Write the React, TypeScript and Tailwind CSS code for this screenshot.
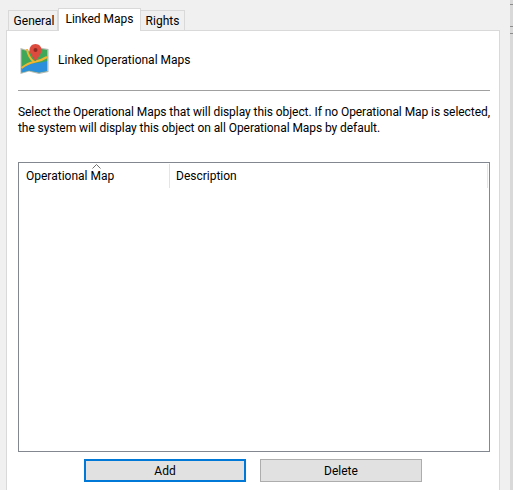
const font = "font-['Roboto','Noto_Sans',sans-serif]"

function MapIcon() {
  return (
    <svg width="30" height="32" viewBox="0 0 30 32" className="shrink-0">
      <path d="M0.5 4 L9 6.5 L19 3.5 L28.5 5 L28.5 28 L19 30 L9 27.5 L0.5 30 Z" fill="#b4b8b4" />
      <path d="M1.5 5.5 L9 7.5 L19 4.5 L27 6 L27 27 L19 28.5 L9 26.5 L1.5 28.5 Z" fill="#3fa758" />
      <path d="M1.5 23 Q10 19 16 19 Q21 19 27 17 L27 27 L19 28.5 L9 26.5 L1.5 28.5 Z" fill="#2c8fdc" />
      <path d="M1.5 24 Q8 19 14 18 Q21 17 27 13" fill="none" stroke="#f3b52f" strokeWidth="2.2" />
      <path d="M7 5 Q8 13 14 18" fill="none" stroke="#f3b52f" strokeWidth="2" />
      <path d="M15.5 0 C11.8 0 9.5 2.8 9.5 6 C9.5 10 15.5 17 15.5 17 C15.5 17 21.5 10 21.5 6 C21.5 2.8 19.2 0 15.5 0 Z" fill="#dc4b3e" />
      <circle cx="15.5" cy="6" r="2" fill="#8f2a22" />
    </svg>
  )
}

export default function App() {
  return (
    <div className={`${font} relative h-[490px] w-[513px] overflow-hidden bg-[#f0f0f0] text-[12px] text-black`}>
      {/* window edge on the right */}
      <div className="absolute right-0 top-0 h-full w-[3px] bg-[#d9d9d9]">
        <div className="mt-[4px] h-px bg-[#8c8c8c]" />
        <div className="mt-[21px] h-px bg-[#8c8c8c]" />
        <div className="mt-[6px] h-px bg-[#8c8c8c]" />
      </div>

      <div className="flex h-[30px] items-end pl-[8px]">
        <div className="flex h-[20px] w-[50px] items-center justify-center border border-b-0 border-[#d9d9d9] pl-[2px]">General</div>
        <div className="relative z-10 -mb-px flex h-[23px] w-[83px] items-center justify-center border border-b-0 border-[#d9d9d9] bg-white pb-[3px]">Linked Maps</div>
        <div className="flex h-[20px] w-[44px] items-center justify-center border border-b-0 border-l-0 border-[#d9d9d9]">Rights</div>
      </div>

      <div className="ml-[6px] flex h-[460px] w-[494px] flex-col border-x border-t border-[#d9d9d9] bg-white px-[11px]">
        <div className="flex h-[59px] items-center gap-[8px] pl-[2px] pb-[2px]">
          <MapIcon />
          <span>Linked Operational Maps</span>
        </div>
        <div className="h-px w-[472px] bg-[#a0a0a0]" />
        <p className="mt-[13px] whitespace-nowrap leading-[16px] tracking-[-0.065px]">
          Select the Operational Maps that will display this object. If no Operational Map is selected,
          <br />
          the system will display this object on all Operational Maps by default.
        </p>
        <div className="mt-[26px] h-[290px] w-[472px] border border-[#828790] bg-white">
          <div className="flex h-[25px] pr-[1px] pt-px">
            <div className="relative flex w-[151px] items-center border-r border-[#e5e5e5] pl-[7px]">
              Operational Map
              <svg width="9" height="5" viewBox="0 0 9 5" className="absolute left-[73px] top-0">
                <path d="M0.5 4.5 L4.5 0.5 L8.5 4.5" fill="none" stroke="#6f6f6f" />
              </svg>
            </div>
            <div className="flex flex-1 items-center border-r border-[#e5e5e5] pl-[6px]">Description</div>
          </div>
        </div>
        <div className="mt-[7px] flex gap-[14px] pl-[66px]">
          <button className="h-[23px] w-[162px] border-2 border-[#0078d7] bg-[#e1e1e1]">Add</button>
          <button className="h-[23px] w-[162px] border border-[#adadad] bg-[#e1e1e1]">Delete</button>
        </div>
      </div>
    </div>
  )
}
